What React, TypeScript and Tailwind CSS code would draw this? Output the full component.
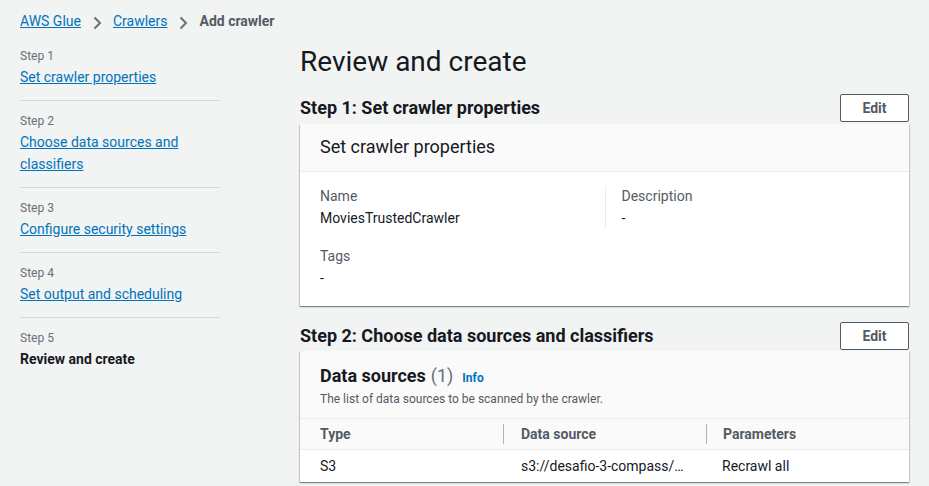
import React from "react";

const font = { fontFamily: "Roboto, 'Open Sans', sans-serif" };

const steps = [
  { label: "Step 1", title: "Set crawler properties" },
  { label: "Step 2", title: "Choose data sources and classifiers" },
  { label: "Step 3", title: "Configure security settings" },
  { label: "Step 4", title: "Set output and scheduling" },
  { label: "Step 5", title: "Review and create", current: true },
];

function Chevron() {
  return (
    <svg width="16" height="16" viewBox="0 0 16 16" className="mx-[8px]">
      <path d="M5.5 2.5 11 8l-5.5 5.5" fill="none" stroke="#687078" strokeWidth="2" />
    </svg>
  );
}

function EditButton() {
  return (
    <button className="h-[28px] w-[69px] rounded-[2px] border border-[#545b64] bg-white text-[14px] font-bold text-[#545b64]">
      Edit
    </button>
  );
}

const card =
  "bg-white shadow-[0_1px_1px_0_rgba(0,28,36,0.3),1px_1px_1px_0_rgba(0,28,36,0.15),-1px_1px_1px_0_rgba(0,28,36,0.15)]";

export default function App() {
  return (
    <div style={font} className="min-h-screen bg-[#f2f3f3] px-5 text-[#16191f]">
      <nav className="flex h-[31px] items-end pt-[11px] text-[14px] leading-5">
        <a className="text-[#0073bb] underline">AWS Glue</a>
        <Chevron />
        <a className="text-[#0073bb] underline">Crawlers</a>
        <Chevron />
        <span className="font-bold text-[#545b64]">Add crawler</span>
      </nav>

      <div className="flex">
        <aside className="mr-[80px] w-[200px] shrink-0 pt-[5px]">
          {steps.map((s, i) => (
            <div key={s.label} className={`py-3 ${i > 0 ? "border-t border-[#d5dbdb]" : ""}`}>
              <div className="mb-[2px] text-[12px] leading-4 text-[#687078]">{s.label}</div>
              {s.current ? (
                <div className="text-[14px] font-bold leading-[22px]">{s.title}</div>
              ) : (
                <a className="block text-[14px] leading-[22px] text-[#0073bb] underline">{s.title}</a>
              )}
            </div>
          ))}
        </aside>

        <main className="flex-1 pt-[13px]">
          <h1 className="text-[28px] font-normal leading-9">Review and create</h1>

          <div className="mt-[14px] flex items-center justify-between">
            <h2 className="text-[18px] font-bold leading-[22px]">Step 1: Set crawler properties</h2>
            <EditButton />
          </div>
          <section className={`mt-[2px] ${card}`}>
            <div className="flex h-[48px] items-center border-b border-[#eaeded] bg-[#fafafa] px-5 pb-[2px] text-[18px] leading-[22px]">
              Set crawler properties
            </div>
            <div className="px-5 pb-[18px] pt-[14px] text-[14px] leading-5">
              <div className="grid grid-cols-2">
                <div>
                  <div className="text-[#545b64]">Name</div>
                  <div className="mt-[2px]">MoviesTrustedCrawler</div>
                </div>
                <div className="border-l border-[#eaeded] pl-4">
                  <div className="text-[#545b64]">Description</div>
                  <div className="mt-[2px]">-</div>
                </div>
              </div>
              <div className="mt-[18px] text-[#545b64]">Tags</div>
              <div className="mt-[2px]">-</div>
            </div>
          </section>

          <div className="mt-[16px] flex items-center justify-between">
            <h2 className="text-[18px] font-bold leading-[22px]">Step 2: Choose data sources and classifiers</h2>
            <EditButton />
          </div>
          <section className={`mt-[1px] ${card}`}>
            <div className="border-b border-[#eaeded] bg-[#fafafa] px-5 pb-[11px] pt-[14px]">
              <div className="flex items-baseline text-[18px] leading-[22px]">
                <span className="font-bold">Data sources</span>
                <span className="ml-[5px] text-[#687078]">(1)</span>
                <span className="ml-[9px] text-[12px] font-bold text-[#0073bb]">Info</span>
              </div>
              <div className="mt-[2px] text-[12px] leading-4 text-[#545b64]">
                The list of data sources to be scanned by the crawler.
              </div>
            </div>
            <div className="grid h-[31px] grid-cols-3 items-center border-b border-[#eaeded] bg-[#fafafa] text-[14px] font-bold leading-5 text-[#545b64]">
              <div className="pl-5">Type</div>
              <div className="border-l border-[#aab7b8] pl-[17px]">Data source</div>
              <div className="border-l border-[#aab7b8] pl-4">Parameters</div>
            </div>
            <div className="grid h-[32px] grid-cols-3 items-center text-[14px] leading-5">
              <div className="pl-5">S3</div>
              <div className="pl-[18px]">s3://desafio-3-compass/…</div>
              <div className="pl-4">Recrawl all</div>
            </div>
          </section>
        </main>
      </div>
    </div>
  );
}
